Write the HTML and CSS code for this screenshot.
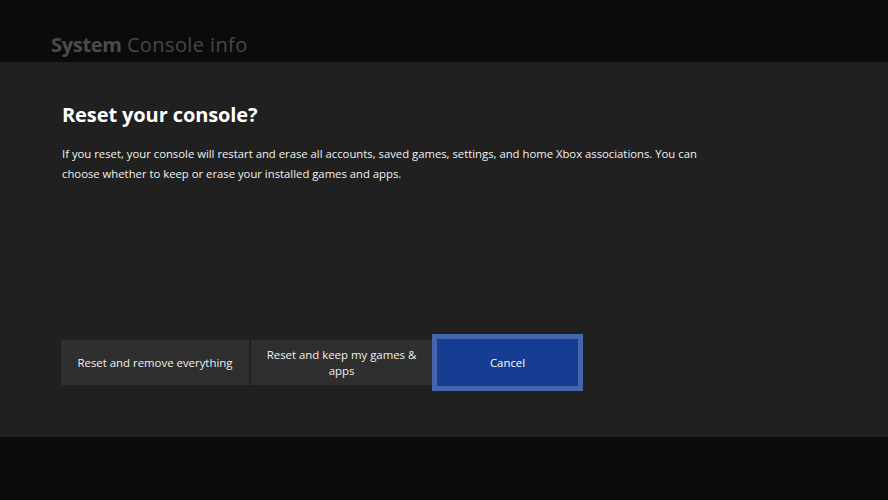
FILE: index.html
```html
<!DOCTYPE html>
<html lang="en">
<head>
  <meta charset="UTF-8">
  <title>Console info | System</title>
  <link rel="stylesheet" href="styles.css">
</head>
<body>

  <header class="topbar">
    <h1><span class="crumb-main">System</span> <span class="crumb-sub">Console info</span></h1>
  </header>

  <main class="dialog">
    <h2 class="dialog-title">Reset your console?</h2>
    <p class="dialog-text">If you reset, your console will restart and erase all accounts, saved games, settings, and home Xbox associations. You can choose whether to keep or erase your installed games and apps.</p>

    <div class="actions">
      <button class="btn">Reset and remove everything</button>
      <button class="btn">Reset and keep my games &amp; apps</button>
      <button class="btn btn-focus">Cancel</button>
    </div>
  </main>

  <footer class="bottombar"></footer>

</body>
</html>
```

FILE: styles.css
```css
body {
  font-family: 'Open Sans', 'Noto Sans', sans-serif;
  background-color: #0b0b0b;
  color: #fff;
  margin: 0;
  height: 500px;
  display: flex;
  flex-direction: column;
}

.topbar {
  height: 62px;
  box-sizing: border-box;
  padding: 30px 0 0 51px;
}

.topbar h1 {
  margin: 0;
  font-size: 20px;
  line-height: 30px;
  font-weight: normal;
  color: #4b4b4b;
  white-space: nowrap;
}

.crumb-main {
  font-weight: 700;
  letter-spacing: -0.3px;
}

.crumb-sub {
  font-weight: 400;
  color: #474747;
  letter-spacing: 0.4px;
}

.dialog {
  height: 375px;
  box-sizing: border-box;
  background-color: #202020;
  padding: 38px 0 0 62px;
  display: flex;
  flex-direction: column;
}

.dialog-title {
  margin: 0;
  font-size: 20px;
  line-height: 30px;
  font-weight: 700;
  letter-spacing: -0.1px;
}

.dialog-text {
  margin: 14px 0 0;
  width: 660px;
  font-size: 11.3px;
  line-height: 20px;
  color: #f2f2f2;
}

.actions {
  display: flex;
  align-items: center;
  gap: 2px;
  margin: 150px 0 0 -1px;
}

.btn {
  font-family: inherit;
  font-size: 11.4px;
  line-height: 16px;
  color: #f0f0f0;
  background-color: #2f2f2f;
  border: 0;
  height: 45px;
  padding: 0 8px;
  text-align: center;
}

.btn:nth-child(1) {
  width: 188px;
}

.btn:nth-child(2) {
  width: 181px;
}

.btn-focus {
  width: 151px;
  height: 57px;
  margin-left: -2px;
  background-color: #173d93;
  border: 5px solid #4565ad;
  color: #fff;
}

.bottombar {
  flex: 1;
}
```
